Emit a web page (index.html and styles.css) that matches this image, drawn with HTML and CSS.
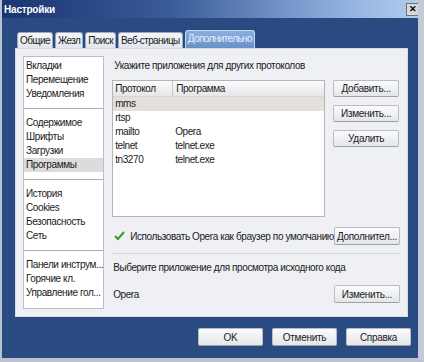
FILE: index.html
```html
<!DOCTYPE html>
<html lang="ru">
<head>
    <meta charset="UTF-8">
    <title>Настройки</title>
    <link rel="stylesheet" href="styles.css">
</head>
<body>
    <div class="window">
        <div class="titlebar">
            <span class="title">Настройки</span>
            <span class="close">&#x2715;</span>
        </div>

        <!-- Вкладки -->
        <div class="tabs">
            <div class="tab">Общие</div>
            <div class="tab">Жезл</div>
            <div class="tab">Поиск</div>
            <div class="tab">Веб-страницы</div>
            <div class="tab active">Дополнительно</div>
        </div>

        <div class="panel">
            <div class="side-list">
                <div class="group">
                    <div class="item">Вкладки</div>
                    <div class="item">Перемещение</div>
                    <div class="item">Уведомления</div>
                </div>
                <div class="group">
                    <div class="item">Содержимое</div>
                    <div class="item">Шрифты</div>
                    <div class="item">Загрузки</div>
                    <div class="item selected">Программы</div>
                </div>
                <div class="group">
                    <div class="item">История</div>
                    <div class="item">Cookies</div>
                    <div class="item">Безопасность</div>
                    <div class="item">Сеть</div>
                </div>
                <div class="group last">
                    <div class="item">Панели инструм...</div>
                    <div class="item">Горячие кл.</div>
                    <div class="item">Управление гол...</div>
                </div>
            </div>

            <div class="content">
                <div class="label top-label">Укажите приложения для других протоколов</div>
                <div class="protocols">
                    <div class="table">
                        <div class="row head">
                            <div class="col1">Протокол</div>
                            <div class="col2">Программа</div>
                        </div>
                        <div class="row selected"><div class="col1">mms</div><div class="col2"></div></div>
                        <div class="row"><div class="col1">rtsp</div><div class="col2"></div></div>
                        <div class="row"><div class="col1">mailto</div><div class="col2">Opera</div></div>
                        <div class="row"><div class="col1">telnet</div><div class="col2">telnet.exe</div></div>
                        <div class="row"><div class="col1">tn3270</div><div class="col2">telnet.exe</div></div>
                    </div>
                    <div class="side-buttons">
                        <button class="btn">Добавить...</button>
                        <button class="btn">Изменить...</button>
                        <button class="btn">Удалить</button>
                    </div>
                </div>

                <div class="default-row">
                    <span class="check">
                        <svg width="11" height="10" viewBox="0 0 11 10"><path d="M1 5 L4 8 L10 1" fill="none" stroke="#3c9a1c" stroke-width="2"/></svg>
                    </span>
                    <span class="label check-label">Использовать Opera как браузер по умолчанию</span>
                    <button class="btn">Дополнител...</button>
                </div>

                <div class="divider"></div>

                <div class="label source-label">Выберите приложение для просмотра исходного кода</div>
                <div class="source-row">
                    <span class="label">Opera</span>
                    <button class="btn">Изменить...</button>
                </div>
            </div>
        </div>

        <div class="footer">
            <button class="btn wide">OK</button>
            <button class="btn wide">Отменить</button>
            <button class="btn wide">Справка</button>
        </div>
    </div>
</body>
</html>
```

FILE: styles.css
```css
body {
    margin: 0;
    padding: 0;
    font-family: "Liberation Sans", Arial, sans-serif;
    font-size: 10px;
    letter-spacing: -0.4px;
    color: #1a1a1a;
}
.window {
    width: 424px;
    height: 362px;
    box-sizing: border-box;
    background-color: #2a4a82;
    border-left: 2px solid #b8c2d4;
    border-right: 6px solid #c4cad6;
    border-bottom: 4px solid #bcc2ce;
    position: relative;
    overflow: hidden;
}
.titlebar {
    height: 18px;
    display: flex;
    align-items: center;
    justify-content: space-between;
    padding: 0 4px 0 2px;
    background: linear-gradient(to right, #1a3570 0%, #3a5c98 40%, #8fb0de 80%, #b4cdee 100%);
    margin-right: -6px;
}
.title {
    color: #ffffff;
    font-weight: bold;
    font-size: 10px;
    letter-spacing: -0.2px;
}
.close {
    width: 12px;
    height: 11px;
    background-color: #d8d8d8;
    border: 1px solid #707070;
    font-size: 9px;
    font-weight: bold;
    letter-spacing: 0;
    line-height: 11px;
    text-align: center;
    color: #000;
}
.tabs {
    display: flex;
    align-items: flex-end;
    gap: 2px;
    margin: 13px 0 0 15px;
    height: 17px;
}
.tab {
    height: 15px;
    line-height: 16px;
    padding: 0 2px;
    letter-spacing: -0.6px;
    background: linear-gradient(#f4f6f9, #e2e6ec);
    border: 1px solid #9aa8bf;
    border-bottom: none;
    border-radius: 3px 3px 0 0;
    color: #1a1a1a;
}
.tab.active {
    height: 17px;
    line-height: 16px;
    background: linear-gradient(#8ab0e0, #6890c8);
    border-color: #c6d6ee;
    color: #e8f0fb;
    padding: 0 2px;
}
.panel {
    margin-left: 13px;
    width: 393px;
    height: 269px;
    box-sizing: border-box;
    background-color: #eef0f4;
    border: 1px solid #d6dbe4;
    display: flex;
    padding: 7px 7px 0 7px;
}
.side-list {
    width: 82px;
    height: 253px;
    box-sizing: border-box;
    background-color: #ffffff;
    border: 1px solid #b9bec8;
    padding-top: 2px;
}
.group {
    padding-bottom: 7px;
    margin-bottom: 7px;
    border-bottom: 1px solid #a8adb6;
}
.group.last {
    border-bottom: none;
}
.item {
    height: 14px;
    line-height: 14px;
    padding-left: 2px;
    white-space: nowrap;
    overflow: hidden;
}
.item.selected {
    background-color: #dcdcdc;
}
.content {
    flex: 1;
    padding-left: 8px;
}
.label {
    white-space: nowrap;
}
.top-label {
    height: 14px;
    line-height: 14px;
    margin-top: 3px;
    padding-left: 2px;
}
.protocols {
    display: flex;
    margin-top: 7px;
}
.table {
    width: 213px;
    height: 137px;
    box-sizing: border-box;
    background-color: #ffffff;
    border: 1px solid #b0b5bd;
}
.row {
    display: flex;
    height: 14px;
    line-height: 14px;
}
.row.head {
    height: 15px;
    line-height: 15px;
    background: linear-gradient(#fbfbfb, #e6e6e8);
    border-bottom: 1px solid #d6d6d6;
}
.row.selected {
    background-color: #e4e0dc;
}
.col1 {
    width: 57px;
    padding-left: 2px;
}
.row.head .col1 {
    border-right: 1px solid #c8c8c8;
}
.col2 {
    padding-left: 3px;
}
.side-buttons {
    display: flex;
    flex-direction: column;
    gap: 8px;
    margin-left: 8px;
}
.btn {
    width: 66px;
    height: 17px;
    padding: 0;
    font-family: "Liberation Sans", Arial, sans-serif;
    font-size: 10px;
    letter-spacing: -0.3px;
    color: #1a1a1a;
    background: linear-gradient(#fbfbfc, #e4e6ea);
    border: 1px solid #b8bcc4;
    border-bottom-color: #9ca0a8;
    border-radius: 2px;
    white-space: nowrap;
}
.default-row {
    display: flex;
    align-items: center;
    margin-top: 10px;
    height: 18px;
}
.check {
    width: 16px;
    display: flex;
    align-items: center;
    padding-left: 2px;
}
.check-label {
    flex: 1;
}
.default-row .btn,
.source-row .btn {
    height: 18px;
    margin-right: 1px;
}
.divider {
    height: 1px;
    background-color: #d4d8de;
    margin: 8px 1px 0 0;
}
.source-label {
    margin-top: 7px;
    height: 14px;
    line-height: 14px;
    padding-left: 1px;
}
.source-row {
    display: flex;
    align-items: center;
    justify-content: space-between;
    margin-top: 10px;
    height: 18px;
    padding-left: 1px;
}
.footer {
    display: flex;
    justify-content: flex-end;
    gap: 9px;
    padding: 11px 7px 0 0;
}
.btn.wide {
    width: 65px;
    height: 18px;
}
```
